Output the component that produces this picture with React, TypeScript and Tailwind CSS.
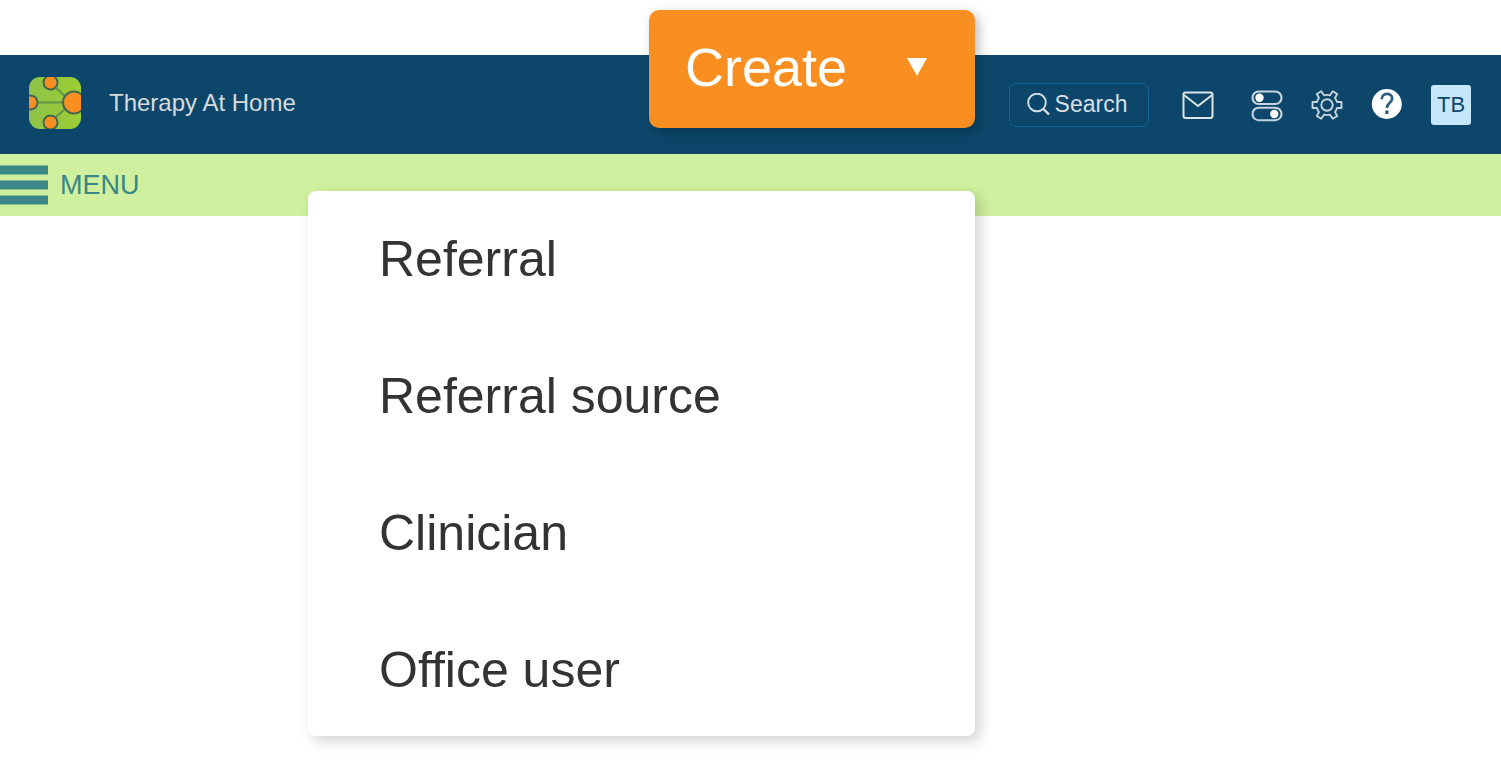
const createOptions = ["Referral", "Referral source", "Clinician", "Office user"];

function Logo() {
  return (
    <svg className="h-[52px] w-[52px]" viewBox="0 0 52 52" aria-hidden="true">
      <defs>
        <clipPath id="tile">
          <rect width="52" height="52" rx="11" />
        </clipPath>
        <linearGradient id="leaf" x1="0" y1="0" x2="1" y2="0">
          <stop offset="0" stopColor="#8dc34a" />
          <stop offset="1" stopColor="#9dcd32" />
        </linearGradient>
      </defs>
      <g clipPath="url(#tile)">
        <rect width="52" height="52" fill="url(#leaf)" />
        <path d="M7 25.500H35M27 11L36 19M27 40L36 32" stroke="#5d9446" strokeWidth="2" fill="none" />
        <g fill="#f98f20" stroke="#47664c" strokeWidth="2">
          <circle cx="21.500" cy="5.500" r="7" />
          <circle cx="1.500" cy="25.500" r="7" />
          <circle cx="21.500" cy="45.500" r="7" />
          <circle cx="45" cy="25.500" r="11" />
        </g>
      </g>
    </svg>
  );
}

function SearchIcon() {
  return (
    <svg className="h-6 w-6" viewBox="0 0 24 24" fill="none" stroke="#d3dfe6" strokeWidth="1.900" aria-hidden="true">
      <circle cx="10" cy="9.500" r="8.800" />
      <path d="M16 15.500L22 21.500" strokeWidth="2.400" />
    </svg>
  );
}

function MailIcon() {
  return (
    <svg className="h-[28px] w-[32px]" viewBox="0 0 32 28" fill="none" stroke="#dbe5ea" strokeWidth="2" aria-hidden="true">
      <rect x="1.500" y="1.500" width="29" height="25.500" rx="2" />
      <path d="M2 4L16 15L30 4" />
    </svg>
  );
}

function TogglesIcon() {
  return (
    <svg className="h-[34px] w-[32px]" viewBox="0 0 32 34" fill="none" stroke="#c6d4dd" strokeWidth="2.100" aria-hidden="true">
      <rect x="1.500" y="3.500" width="29" height="12.500" rx="6.250" />
      <rect x="1.500" y="19.700" width="29" height="12.500" rx="6.250" />
      <g fill="#fff" stroke="none">
        <circle cx="8.500" cy="9.800" r="4.200" />
        <circle cx="23.300" cy="26" r="4.200" />
      </g>
    </svg>
  );
}

function GearIcon() {
  return (
    <svg className="h-[32px] w-[32px]" viewBox="0 0 32 32" fill="none" stroke="#c6d4dd" strokeWidth="1.900" strokeLinejoin="round" aria-hidden="true">
      <path d="M1.500 13H6Q6.600 10.800 8 9L5.800 5L10.200 2.300L13 6.300Q16 5.400 19 6.300L21.800 2.300L26.200 5L24 9Q25.400 10.800 26 13H30.500V19H26Q25.400 21.200 24 23L26.200 27L21.800 29.700L19 25.700Q16 26.600 13 25.700L10.200 29.700L5.800 27L8 23Q6.600 21.200 6 19H1.500Z" />
      <circle cx="16" cy="16" r="5.700" />
    </svg>
  );
}

function HelpIcon() {
  return (
    <svg className="h-[32px] w-[32px]" viewBox="0 0 32 32" fill="none" aria-hidden="true">
      <circle cx="15.800" cy="15" r="15" fill="#fff" />
      <path d="M10.700 10.300C10.700 3 21.200 3.200 21.200 9.500C21.200 13.600 15.900 14 15.900 19" stroke="#2b5d80" strokeWidth="2.700" />
      <rect x="14.300" y="21.500" width="3.200" height="3.500" fill="#2b5d80" />
    </svg>
  );
}

export default function App() {
  return (
    <div className="min-h-screen bg-white pt-[55px] font-['Liberation_Sans',Arial,sans-serif]">
      <header className="relative z-10 flex h-[99px] items-center bg-[#0c476b] pr-[30px] pl-[29px]">
        <a href="#home" className="flex items-center gap-7 pb-1 text-[24px] leading-8 text-[#d8dadc]">
          <Logo />
          Therapy At Home
        </a>

        <div className="relative -mt-[45px] ml-auto w-[326px] self-start">
          <button
            type="button"
            aria-expanded="true"
            className="flex h-[118px] w-full items-center justify-between rounded-[10px] bg-[#f98f20] pr-12 pb-1 pl-9 text-[54px] text-white shadow-[4px_4px_12px_rgba(0,0,0,0.25)]"
          >
            Create
            <svg className="h-[18px] w-[20px]" viewBox="0 0 20 18" fill="#fff" aria-hidden="true">
              <path d="M0 0H20L10 18Z" />
            </svg>
          </button>
          <ul className="absolute top-[181px] right-0 flex w-[667px] flex-col gap-[76px] rounded-[8px] bg-white px-[71px] pt-[38px] pb-[35px] shadow-[5px_5px_14px_rgba(0,0,0,0.18)]">
            {createOptions.map((option) => (
              <li key={option}>
                <button type="button" className="block w-full text-left text-[50px] leading-[61px] text-[#333]">
                  {option}
                </button>
              </li>
            ))}
          </ul>
        </div>

        <div className="ml-[34px] flex items-center">
          <button
            type="button"
            className="flex h-11 w-[140px] items-center justify-center gap-1 rounded-[7px] border border-[#126396] pr-1 text-[23px] text-[#d8dfe5]"
          >
            <SearchIcon />
            Search
          </button>
          <button type="button" aria-label="Messages" className="mr-[37px] ml-[33px]">
            <MailIcon />
          </button>
          <div className="flex items-center gap-7">
            <button type="button" aria-label="Switches">
              <TogglesIcon />
            </button>
            <button type="button" aria-label="Settings">
              <GearIcon />
            </button>
            <button type="button" aria-label="Help">
              <HelpIcon />
            </button>
            <button
              type="button"
              aria-label="TB"
              className="h-10 w-10 rounded-[3px] bg-[#c6e7fa] text-[22px] text-[#0c476b]"
            >
              TB
            </button>
          </div>
        </div>
      </header>

      <nav className="h-[62px] bg-[#cff09e]">
        <button type="button" className="flex h-full items-center gap-3 text-[27px] text-[#3b8686]">
          <svg className="h-10 w-12" viewBox="0 0 48 40" fill="#3b8686" aria-hidden="true">
            <path d="M0 0.500H48V9.500H0ZM0 15.500H48V24.500H0ZM0 30.500H48V39.500H0Z" />
          </svg>
          MENU
        </button>
      </nav>
    </div>
  );
}
